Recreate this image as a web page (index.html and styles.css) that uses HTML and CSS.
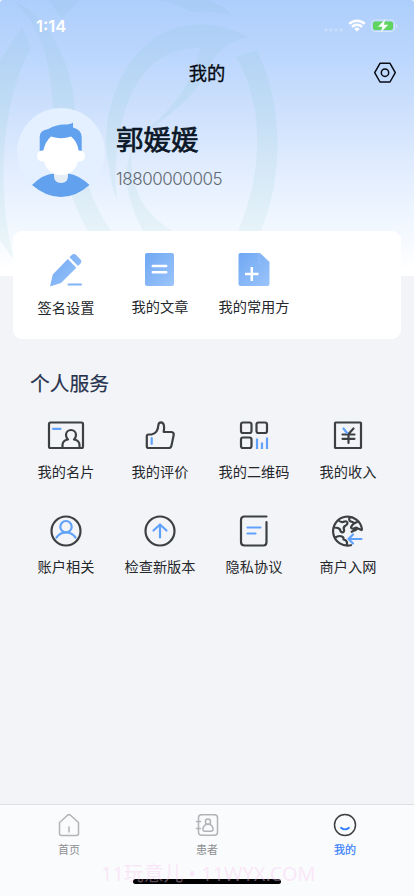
FILE: index.html
```html
<!DOCTYPE html>
<html lang="zh-CN">
<head>
<meta charset="utf-8">
<meta name="viewport" content="width=device-width, initial-scale=1">
<title>我的</title>
<link rel="stylesheet" href="styles.css">
</head>
<body>
<div class="app">
  <header class="hero">
    <svg class="pattern" viewBox="0 0 414 276" aria-hidden="true">
      <defs><linearGradient id="leaf" gradientUnits="userSpaceOnUse" x1="0" y1="0" x2="0" y2="260"><stop offset="0" stop-color="#a3c9f1"/><stop offset=".35" stop-color="#b2d6ed"/><stop offset="1" stop-color="#e2f2f2"/></linearGradient></defs>
      <g fill="url(#leaf)" opacity=".5">
        <path d="M22 27 31 48C8 88-8 170 14 260L0 240V60Z"/>
        <path d="M13 0C50 18 67 58 73 92 78 128 76 180 111 231H88C60 182 54 125 52 95 49 45 32 18 13 0Z"/>
        <path d="M48 0H80L62 18ZM155 0H208Q225 6 232 15 210 10 191 12 176 3 155 0Z"/>
        <path d="M248 37C216 19 176 20 148 43 112 73 100 129 109 167Q112 191 117 199C112 154 121 104 142 76 158 55 178 48 200 48 196 74 177 105 151 126 124 148 117 182 143 231H173C142 213 131 188 131 153 148 122 183 114 202 79 214 56 222 43 248 37Z"/>
        <path d="M236 57 257 50C281 100 286 168 261 231H238C264 170 264 105 236 57Z"/>
      </g>
    </svg>
    <div class="statusbar">
      <span class="time">1:14</span>
      <svg class="signals" width="76" height="16" viewBox="0 0 76 16">
        <g fill="#d5e5fb" opacity=".6"><circle cx="4" cy="12" r="1.700"/><circle cx="9" cy="12" r="1.700"/><circle cx="14" cy="12" r="1.700"/><circle cx="19" cy="12" r="1.700"/></g>
        <g fill="none" stroke="#fff" stroke-width="2.600"><path d="M27.300 5.900a11 11 0 0 1 15.400 0M30 8.900a7 7 0 0 1 10 0"/></g>
        <path d="M35 13.600 32.300 10.900a3.800 3.800 0 0 1 5.400 0Z" fill="#fff"/>
        <rect x="49.500" y="2" width="23" height="11.500" rx="3.500" fill="none" stroke="#d5e6fb"/>
        <rect x="51" y="3.500" width="20" height="8.500" rx="2" fill="#5fd45f"/>
        <path d="M74 6v4q1.500-.5 1.500-2T74 6Z" fill="#d5e6fb"/>
        <path d="M63 1.500 56 8.700h4.300l-1.400 5.500 7.400-7.400H62Z" fill="#fff"/>
      </svg>
    </div>
    <div class="navbar">
      <h1>我的</h1>
      <svg class="settings" width="24" height="24" viewBox="0 0 24 24" fill="none" stroke="#080c14" stroke-width="1.500" stroke-linejoin="round"><path d="M7 2.300H17L22.300 11.700 17 21H7L1.700 11.700Z"/><circle cx="12" cy="11.700" r="3.700"/></svg>
    </div>
    <div class="profile">
      <svg class="avatar" width="88" height="90" viewBox="0 0 88 90">
        <circle cx="44" cy="44" r="44" fill="#e4f0ff"/>
        <path d="M22.700 43V29q0-7 8.800-8 7-4.500 16-4.500 6 0 8.500-2V19.500q8.700 2 8.700 10V43Z" fill="#61a1ee"/>
        <path d="M15 77Q26 66 37 65.500H51Q62 67 72.500 77 59 89 44 89T15 77Z" fill="#61a1ee"/>
        <path d="M37 62H51v6q0 7-7 7t-7-7Z" fill="#e7edf5"/>
        <path d="M34 28.500Q44 32 54 28.500 60 33 61.700 42.500q6.300 0 6.300 5.500 0 5.500-7 5.500-4 13.500-17 13.500T27 53.500q-7 0-7-5.500 0-5.500 6.300-5.500 2-9 7.700-14Z" fill="#fff"/>
      </svg>
      <div class="who"><div class="name">郭媛媛</div><div class="phone">18800000005</div></div>
    </div>
  </header>

  <svg class="defs" width="0" height="0" aria-hidden="true"><defs><linearGradient id="blue" x1="0" y1="0" x2="1" y2="1"><stop offset="0" stop-color="#70a8f3"/><stop offset="1" stop-color="#9bc4fa"/></linearGradient></defs></svg>
  <section class="card grid">
    <a class="item first"><svg width="40" height="40" viewBox="0 0 40 40"><path d="M23.500 7.300 26 4.800q2-1.800 4 0l4.500 4.700q1.700 2 0 4L32 16ZM21.800 9 30.300 17.700 15 33 4 36.500 6.800 24.500Z" fill="url(#blue)"/><path d="M22.500 34.500H35" stroke="#82b3f6" stroke-width="2" stroke-linecap="round"/></svg><span>签名设置</span></a>
    <a class="item"><svg width="40" height="40" viewBox="0 0 40 40"><rect x="5" y="3" width="29" height="33" rx="2" fill="url(#blue)"/><path d="M12.800 16H26.200M12.800 22.300H26.200" stroke="#fff" stroke-width="2.500" stroke-linecap="round"/></svg><span>我的文章</span></a>
    <a class="item"><svg width="40" height="40" viewBox="0 0 40 40"><path d="M6.500 3H26l9.500 9V34q0 2-2 2h-27q-2 0-2-2V5q0-2 2-2Z" fill="url(#blue)"/><path d="M25 3v8q0 2.500 3 2.500" fill="none" stroke="#94bff8"/><path d="M11 24H24.500M17.800 17V31" stroke="#fff" stroke-width="2.500"/></svg><span>我的常用方</span></a>
  </section>

  <section class="services">
    <h2>个人服务</h2>
    <div class="grid">
      <a class="item"><svg width="40" height="40" viewBox="0 0 40 40"><rect x="3" y="7.500" width="34" height="25.500" rx="1.500"/><path d="M16.500 33v-3q0-4.500 5.500-5.500-2-2-2-4.500a5 5 0 0 1 10 0q0 2.500-2 4.500 5.500 1 5.500 5.500v3"/><path class="blue" d="M7 13.800H14.500"/></svg><span>我的名片</span></a>
      <a class="item"><svg width="40" height="40" viewBox="0 0 40 40"><path d="M8.500 19.500H11.500Q18 18 18.300 10.500q.3-3.200 2.700-3.200 4.300.5 2.700 9.700H31.500q2.500.3 2.200 3L31.500 30.500q-.5 2.500-2.700 2.500H8.500q-1.700 0-1.700-1.700V21.300q0-1.800 1.700-1.800Z"/><path class="blue" d="M11.700 23v6"/></svg><span>我的评价</span></a>
      <a class="item"><svg width="40" height="40" viewBox="0 0 40 40"><rect x="7" y="7.500" width="10.500" height="10.500" rx="2"/><rect x="22.500" y="7.500" width="10.500" height="10.500" rx="2"/><rect x="7" y="22.500" width="10.500" height="10.500" rx="2"/><path class="blue thin" d="M23 23.500V34M28 27.500V34M33 22.500V34"/></svg><span>我的二维码</span></a>
      <a class="item"><svg width="40" height="40" viewBox="0 0 40 40"><rect x="7" y="7.500" width="26" height="25.500" rx=".5"/><path d="M25.500 13.500 20.500 19V28M14.500 19.500H26.500M14.500 23.800H26.500"/><path class="blue" d="M15.500 13.500 19 18"/></svg><span>我的收入</span></a>
      <a class="item"><svg width="40" height="40" viewBox="0 0 40 40"><circle cx="20" cy="20" r="14.500"/><path class="blue" d="M10.500 26.500Q14 21.500 20 21.500t9.500 5"/><circle class="blue" cx="20" cy="15.700" r="5.700"/></svg><span>账户相关</span></a>
      <a class="item"><svg width="40" height="40" viewBox="0 0 40 40"><circle cx="20" cy="20" r="14.500"/><path class="blue" d="M20 26.500V14M13.500 19.500 20 13.500l6.500 6"/></svg><span>检查新版本</span></a>
      <a class="item"><svg width="40" height="40" viewBox="0 0 40 40"><path d="M32.500 5.500H10.500q-3.500 0-3.500 3.500V31q0 3.500 3.500 3.500H29.500q3 0 3-3.500V11"/><path class="blue" d="M13.500 16.500H26.500M13.500 22.500H21.500"/></svg><span>隐私协议</span></a>
      <a class="item"><svg width="40" height="40" viewBox="0 0 40 40"><path d="M34 18.500A14.500 14.500 0 1 0 23 34.200M10.500 9.500q3 2.500 6 1 3-.5 3 1.500 0 1.800-2.500 3-2 1.500-1 3.500.5 2.500-1.500 3-2-.3-2.500-3-1.500-2-5.500-2M21.500 6q-1 4 1.500 4.500l3.500 1.500q-2 1.500-3.500 4 0 2 3 1.500 3-1.500 3-.2-.5 2-2.500 2l-2.800 1.500M27 12l3-1.500M30 17.500l3.500 1.500M7 27q3.500-3 7-1.500 2 1 1.500 3 3 .5 3.500 3v3"/><path class="blue" d="M33.500 28H21.500M25 23.500 20.500 28l4.500 4.500"/></svg><span>商户入网</span></a>
    </div>
  </section>

  <footer class="tabbar">
    <nav class="tabs">
      <a class="tab"><svg width="26" height="26" viewBox="0 0 26 26"><path d="M3.500 10.500 11.500 3.300q1.500-1.300 3 0l8 7.200V21.500q0 2-2 2h-15q-2 0-2-2ZM13 15v5"/></svg><span>首页</span></a>
      <a class="tab"><svg width="26" height="26" viewBox="0 0 26 26"><rect x="4.500" y="2.800" width="19" height="20.500" rx="3"/><circle cx="14" cy="9.700" r="2.600"/><path d="M10.500 19.200Q8.500 19 9 16.500 9.800 12.300 14 12.300t5 4.200q.5 2.500-1.500 2.700ZM2.500 9.500H6.500M2.500 16.500H6.500"/></svg><span>患者</span></a>
      <a class="tab active"><svg width="26" height="26" viewBox="0 0 26 26"><circle cx="13" cy="13" r="10.500"/><path class="blue" d="M9 15.700q4 3.300 8 0"/></svg><span>我的</span></a>
    </nav>
    <div class="home"></div>
    <div class="mark">11玩意儿 • 11WYX.COM</div>
  </footer>
</div>
</body>
</html>
```
FILE: styles.css
```css
* { box-sizing: border-box; }
body {
  margin: 0;
  background: #fff;
  font-family: "Noto Sans CJK SC", sans-serif;
  color: #24272c;
}
.app {
  width: 414px;
  height: 896px;
  display: flex;
  flex-direction: column;
  background: #f3f4f7;
  border-radius: 3px 3px 0 0;
  overflow: hidden;
}
.hero {
  position: relative;
  height: 276px;
  flex: none;
  background: linear-gradient(#adcefc 0, #bbd6fd 55px, #cde0fc 110px, #e0ecfe 165px, #f1f7ff 225px, #fff 270px);
}
.pattern { position: absolute; inset: 0; width: 414px; height: 276px; }
.statusbar, .navbar, .profile { position: relative; display: flex; }
.statusbar {
  height: 50px;
  padding: 1px 16px 0 36px;
  align-items: center;
  justify-content: space-between;
}
.time {
  font: 600 16.500px/20px Inter, sans-serif;
  color: #fff;
  letter-spacing: 0;
}
.signals { display: block; }
.navbar {
  height: 46px;
  padding: 0 17px 0 41px;
  align-items: center;
}
h1 {
  flex: 1;
  margin: -2px 0 0;
  text-align: center;
  font-size: 18.300px;
  line-height: 26px;
  font-weight: 400;
  -webkit-text-stroke: .3px currentColor;
  color: #05080e;
}
.profile { padding: 12px 0 0 17px; gap: 11px; }
.avatar { flex: none; }
.who { padding-top: 9px; }
.name {
  font-size: 27.500px;
  line-height: 42px;
  font-weight: 400;
  -webkit-text-stroke: .7px currentColor;
  color: #0b1726;
}
.phone {
  margin-top: 8px;
  font: 300 17px/24px Inter, sans-serif;
  letter-spacing: -.45px;
  color: #626970;
}
.defs { position: absolute; }
.grid {
  display: grid;
  grid-template-columns: repeat(4, 94px);
}
.item {
  display: flex;
  flex-direction: column;
  align-items: center;
  font-size: 14.200px;
  line-height: 20px;
  white-space: nowrap;
}
.item svg { display: block; margin-bottom: 6px; }
.card {
  position: relative;
  flex: none;
  height: 108px;
  width: 388px;
  margin: -45px 0 0 13px;
  padding: 19px 0 0 6px;
  border-radius: 9px;
  background: #fff;
}
.first span { padding-top: 1px; }
.services { flex: 1; padding: 29px 19px 0; }
h2 {
  margin: 0 0 18px 11px;
  font-size: 19.800px;
  line-height: 29px;
  font-weight: 400;
  -webkit-text-stroke: .2px currentColor;
  color: #26324d;
}
.services .grid { grid-auto-rows: 95.500px; }
.services svg, .tab svg {
  fill: none;
  stroke: #3d4042;
  stroke-width: 2.200;
  stroke-linecap: round;
  stroke-linejoin: round;
}
.services svg { margin-bottom: 5.500px; }
.services .blue, .tab .blue { stroke: #60a2fb; }
.services .thin { stroke-linecap: butt; }
.tabbar {
  position: relative;
  height: 92px;
  flex: none;
  border-top: 1px solid #dedfe2;
  background: #fafbfd;
}
.tabs { display: grid; grid-template-columns: repeat(3, 1fr); padding-top: 7px; }
.tab {
  display: flex;
  flex-direction: column;
  align-items: center;
  gap: 4px;
  font-size: 11px;
  line-height: 16px;
  color: #8d8f93;
}
.tab span { margin-top: -1px; }
.tab svg { stroke: #b1b3b7; stroke-width: 1.500; }
.active { color: #347efa; -webkit-text-stroke: .2px currentColor; }
.tab.active svg { stroke: #3d4042; }
.tab .blue { stroke: #347efa; stroke-width: 1.800; }
.home {
  width: 148px;
  height: 5px;
  margin: 22px auto 0;
  border-radius: 3px;
  background: #000;
}
.mark {
  position: absolute;
  left: 101px;
  top: 55px;
  font: 19.900px/28px "Noto Sans", "Noto Sans CJK SC", sans-serif;
  white-space: nowrap;
  color: rgba(248, 200, 240, .38);
}
```
